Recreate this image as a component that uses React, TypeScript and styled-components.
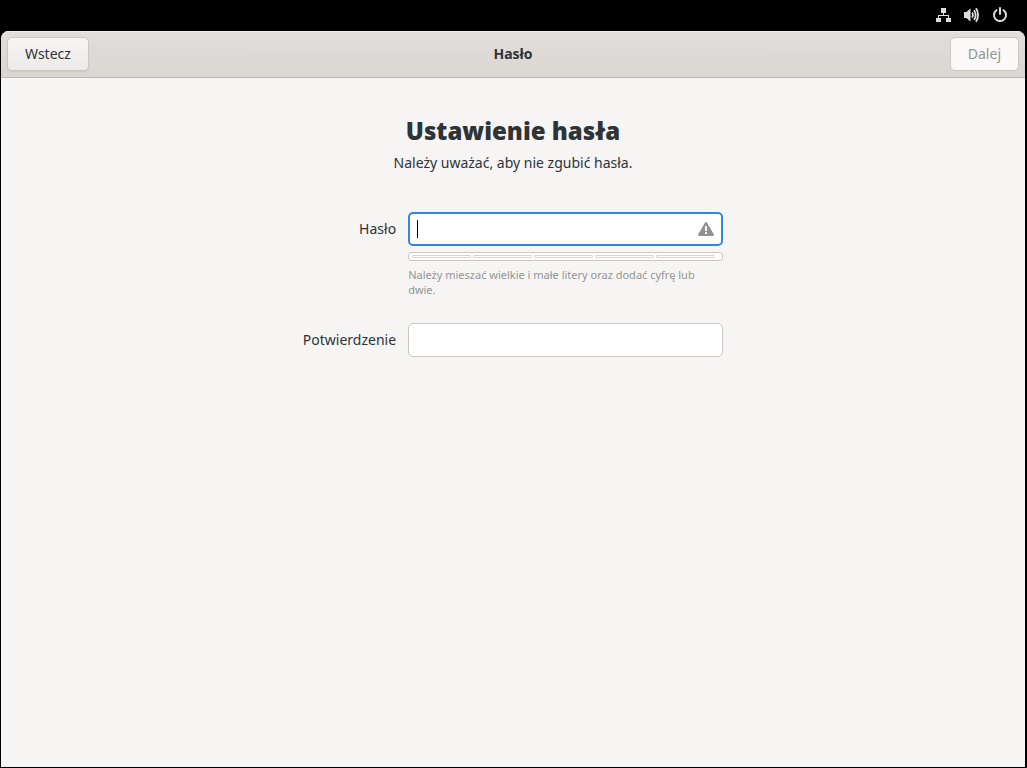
import React, { useState } from "react";
import styled, { createGlobalStyle } from "styled-components";

const GlobalStyle = createGlobalStyle`
  *, *::before, *::after { box-sizing: border-box; }
  body {
    margin: 0;
    background: #000;
    color: #2e3436;
    font-family: "Noto Sans", sans-serif;
    font-size: 14px;
    line-height: 20px;
  }
`;

const Screen = styled.div`
  display: flex;
  flex-direction: column;
  min-height: 100vh;
  padding: 0 2px 1px 1px;
`;

const TopBar = styled.div`
  display: flex;
  justify-content: flex-end;
  align-items: center;
  gap: 12px;
  height: 31px;
  padding: 0 17px 1px 0;
`;

const StatusIcon = styled.svg`
  display: block;
  width: 16px;
  height: 16px;
  color: #dedede;
`;

const Window = styled.main`
  display: flex;
  flex-direction: column;
  flex: 1;
  overflow: hidden;
  border-radius: 8px 8px 0 0;
  background: #f6f5f4;
`;

const HeaderBar = styled.header`
  display: grid;
  grid-template-columns: 1fr auto 1fr;
  align-items: center;
  height: 47px;
  padding: 0 6px;
  border-bottom: 1px solid #bfb8b1;
  background: linear-gradient(to top, #dad6d2, #e1dedb);
  box-shadow: inset 0 1px #f0eeec;
`;

const WindowTitle = styled.div`
  font-weight: 700;
`;

const NavButton = styled.button<{ $end?: boolean }>`
  justify-self: ${(p) => (p.$end ? "end" : "start")};
  height: 34px;
  padding: 0 17px;
  border: 1px solid #cdc7c2;
  border-radius: 5px;
  background: linear-gradient(to top, #edebe9, #f6f5f4);
  box-shadow: 0 1px 2px rgba(0, 0, 0, 0.07);
  color: inherit;
  font: inherit;

  &:disabled {
    background: #faf9f8;
    box-shadow: none;
    color: #929595;
  }
`;

const Page = styled.section`
  display: flex;
  flex-direction: column;
  align-items: center;
  padding: 35px 24px;
`;

const Heading = styled.h1`
  margin: 0;
  font-size: 24px;
  font-weight: 900;
  line-height: 36px;
`;

const Subtitle = styled.p`
  margin: 4px 0 39px;
`;

const Form = styled.form`
  display: grid;
  grid-template-columns: auto minmax(0, 315px);
  column-gap: 12px;
  row-gap: 26px;
`;

const FieldLabel = styled.label`
  justify-self: end;
  line-height: 34px;
`;

const Field = styled.div`
  position: relative;
`;

const Entry = styled.input`
  display: block;
  width: 100%;
  height: 34px;
  padding: 0 8px;
  border: 1px solid #cdc7c2;
  border-radius: 5px;
  outline: none;
  background: #fff;
  color: inherit;
  font: inherit;
`;

const ActiveEntry = styled(Entry)`
  padding-right: 32px;
  border: 2px solid #3584e4;
  caret-color: transparent;
`;

const Caret = styled.span`
  position: absolute;
  top: 8px;
  left: 9px;
  width: 1px;
  height: 18px;
  background: #000;
`;

const WarningIcon = styled.svg`
  position: absolute;
  top: 9px;
  right: 9px;
  width: 16px;
  height: 16px;
  color: #929292;
`;

const StrengthBar = styled.div`
  display: flex;
  gap: 2px;
  height: 9px;
  margin-top: 6px;
  padding: 2px 7px 2px 3px;
  border: 1px solid #cdc7c2;
  border-radius: 3px;
  background: #fff;
`;

const StrengthBlock = styled.span`
  flex: 1;
  height: 3px;
  border: 1px solid #d9d5d1;
  border-radius: 1px;
`;

const Hint = styled.p`
  margin: 6px 0 0;
  color: #929595;
  font-size: 11px;
  line-height: 15px;
`;

export default function App() {
  const [password, setPassword] = useState("");
  const [confirmation, setConfirmation] = useState("");

  return (
    <Screen lang="pl">
      <GlobalStyle />
      <TopBar>
        <StatusIcon viewBox="0 0 16 16" fill="currentColor" aria-label="Sieć">
          <path d="M5 1h5v5H8v2h5v3h2v4h-5v-4h2V9H3v2h2v4H0v-4h2V8h5V6H5z" />
        </StatusIcon>
        <StatusIcon viewBox="0 0 16 16" fill="none" stroke="currentColor" strokeWidth="2" aria-label="Głośność">
          <path d="M0 5h2.500l4-3.800v13.600l-4-3.800H0z" fill="currentColor" stroke="none" />
          <path d="M8 5.500q2 2.500 0 5" strokeWidth="1.700" />
          <path d="M10 3.200q3.400 4.800 0 9.600" strokeWidth="1.800" />
          <path d="M12 1.200q4.200 6.800 0 13.600" strokeWidth="1.800" />
        </StatusIcon>
        <StatusIcon viewBox="0 0 16 16" fill="none" stroke="currentColor" strokeWidth="2" strokeLinecap="round" aria-label="Zasilanie">
          <path d="M8 1v6M4.500 3.200a6 6 0 1 0 7 0" />
        </StatusIcon>
      </TopBar>
      <Window>
        <HeaderBar>
          <NavButton type="button">Wstecz</NavButton>
          <WindowTitle>Hasło</WindowTitle>
          <NavButton type="button" $end disabled>Dalej</NavButton>
        </HeaderBar>
        <Page>
          <Heading>Ustawienie hasła</Heading>
          <Subtitle>Należy uważać, aby nie zgubić hasła.</Subtitle>
          <Form>
            <FieldLabel htmlFor="password">Hasło</FieldLabel>
            <div>
              <Field>
                <ActiveEntry
                  id="password"
                  type="password"
                  aria-describedby="password-hint"
                  value={password}
                  onChange={(e) => setPassword(e.target.value)}
                />
                {password === "" && <Caret />}
                <WarningIcon viewBox="0 0 16 16" aria-hidden="true">
                  <path
                    fill="currentColor"
                    fillRule="evenodd"
                    d="M8 1q.7 0 1.100.7l6.700 11.600q.4 1.700-1.300 1.700h-13q-1.700 0-1.300-1.700L6.900 1.700Q7.300 1 8 1zM7 5v5h2V5zM7 11v2h2v-2z"
                  />
                </WarningIcon>
              </Field>
              <StrengthBar role="meter" aria-label="Siła hasła" aria-valuemin={0} aria-valuemax={5} aria-valuenow={0}>
                {[1, 2, 3, 4, 5].map((level) => (
                  <StrengthBlock key={level} />
                ))}
              </StrengthBar>
              <Hint id="password-hint">Należy mieszać wielkie i małe litery oraz dodać cyfrę lub dwie.</Hint>
            </div>
            <FieldLabel htmlFor="confirmation">Potwierdzenie</FieldLabel>
            <Entry
              id="confirmation"
              type="password"
              value={confirmation}
              onChange={(e) => setConfirmation(e.target.value)}
            />
          </Form>
        </Page>
      </Window>
    </Screen>
  );
}
